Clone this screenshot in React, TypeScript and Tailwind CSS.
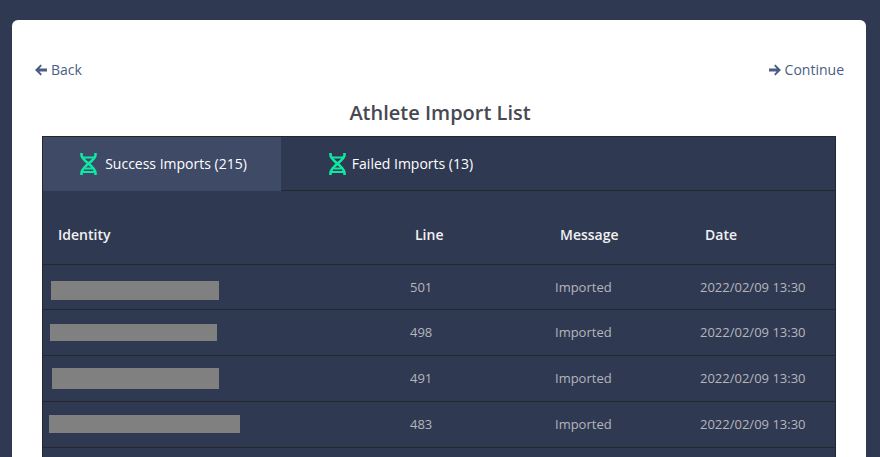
const rows = [
  { line: "501", ml: "ml-[8px]", w: "w-[168px]", h: "h-[19px]", mt: "mt-[16px]", rowH: "h-[45px]" },
  { line: "498", ml: "ml-[7px]", w: "w-[167px]", h: "h-[17px]", mt: "mt-[14px]", rowH: "h-[46px]" },
  { line: "491", ml: "ml-[9px]", w: "w-[167px]", h: "h-[21px]", mt: "mt-[12px]", rowH: "h-[46px]" },
  { line: "483", ml: "ml-[6px]", w: "w-[191px]", h: "h-[18px]", mt: "mt-[13px]", rowH: "h-[46px]" },
];

function DnaIcon() {
  return (
    <svg viewBox="0 0 17 22" className="h-[22px] w-[17px] text-[#0de8a2]" fill="none" stroke="currentColor" strokeWidth="2.6">
      <path d="M1.5 0v2c0 6 14 11 14 18v2" />
      <path d="M15.5 0v2c0 6 -14 11 -14 18v2" />
      <path d="M2 4.5h13M5 15.5h7M2 19h13" strokeWidth="2" />
    </svg>
  );
}

function Arrow({ dir }: { dir: "left" | "right" }) {
  return (
    <svg viewBox="0 0 12 12" className={`h-3 w-3 ${dir === "right" ? "rotate-180" : ""}`} fill="currentColor">
      <path d="M5.6 0.4 6.9 1.7 4.4 4.4H12V7.6H4.4L6.9 10.3 5.6 11.6 0 6Z" />
    </svg>
  );
}

export default function App() {
  return (
    <div className="h-[457px] overflow-hidden bg-[#303952] pl-3 pr-[14px] pt-5 font-['Open_Sans',sans-serif]">
      <div className="h-[600px] rounded-t-md bg-white pt-[39px]">
        {/* Back / continue links */}
        <div className="flex items-center justify-between pl-[23px] pr-[22px] text-sm leading-[22px] text-[#4a5e85]">
          <a className="flex items-center gap-[4px]">
            <Arrow dir="left" />
            Back
          </a>
          <a className="flex items-center gap-[4px]">
            <Arrow dir="right" />
            Continue
          </a>
        </div>

        <h1 className="mt-[18px] mb-[10px] pl-[2px] text-center text-xl leading-[27px] font-semibold text-[#484852]">
          Athlete Import List
        </h1>

        <div className="mx-[30px] h-[400px] border border-[#24272f] bg-[#303952]">
          {/* Tabs */}
          <div className="flex h-[54px] border-b border-[#24272f] text-sm text-white">
            <div className="flex h-[54px] w-[238px] items-center justify-center gap-[8px] bg-[#3f4a67] pl-[3px]">
              <DnaIcon />
              Success Imports (215)
            </div>
            <div className="flex w-[240px] items-center justify-center gap-[6px]">
              <DnaIcon />
              Failed Imports (13)
            </div>
          </div>

          {/* Header */}
          <div className="grid h-[74px] grid-cols-[357px_145px_145px_145px] items-center border-b border-[#24272f] pt-[14px] text-sm font-semibold text-[#f1f1f1]">
            <div className="pl-[15px]">Identity</div>
            <div className="pl-[15px]">Line</div>
            <div className="pl-[15px]">Message</div>
            <div className="pl-[15px]">Date</div>
          </div>

          {/* Rows */}
          {rows.map((row) => (
            <div
              key={row.line}
              className={`grid ${row.rowH} grid-cols-[357px_145px_145px_145px] border-b border-[#24272f] text-[13px] text-[#b4b6bc]`}
            >
              <div>
                <div className={`${row.ml} ${row.mt} ${row.w} ${row.h} bg-[#808080]`} />
              </div>
              <div className="pl-[10px] leading-[44px]">{row.line}</div>
              <div className="pl-[10px] leading-[44px]">Imported</div>
              <div className="pl-[10px] leading-[44px] whitespace-nowrap">2022/02/09 13:30</div>
            </div>
          ))}
        </div>
      </div>
    </div>
  );
}
